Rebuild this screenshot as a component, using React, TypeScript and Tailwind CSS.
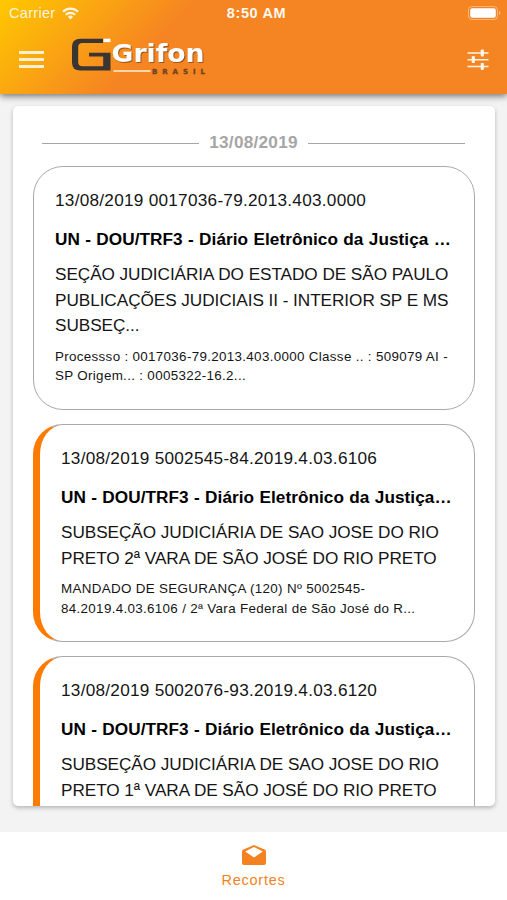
import clsx from 'clsx'

type Recorte = {
  id: string
  heading: string
  title: string
  summary: string[]
  details: string[]
  unread: boolean
}

const RECORTES: Recorte[] = [
  {
    id: '0017036',
    heading: '13/08/2019 0017036-79.2013.403.0000',
    title: 'UN - DOU/TRF3 - Diário Eletrônico da Justiça …',
    summary: ['SEÇÃO JUDICIÁRIA DO ESTADO DE SÃO PAULO', 'PUBLICAÇÕES JUDICIAIS II - INTERIOR SP E MS', 'SUBSEÇ...'],
    details: ['Processso : 0017036-79.2013.403.0000 Classe .. : 509079 AI -', 'SP Origem... : 0005322-16.2...'],
    unread: false,
  },
  {
    id: '5002545',
    heading: '13/08/2019 5002545-84.2019.4.03.6106',
    title: 'UN - DOU/TRF3 - Diário Eletrônico da Justiça…',
    summary: ['SUBSEÇÃO JUDICIÁRIA DE SAO JOSE DO RIO', 'PRETO 2ª VARA DE SÃO JOSÉ DO RIO PRETO'],
    details: ['MANDADO DE SEGURANÇA (120) Nº 5002545-', '84.2019.4.03.6106 / 2ª Vara Federal de São José do R...'],
    unread: true,
  },
  {
    id: '5002076',
    heading: '13/08/2019 5002076-93.2019.4.03.6120',
    title: 'UN - DOU/TRF3 - Diário Eletrônico da Justiça…',
    summary: ['SUBSEÇÃO JUDICIÁRIA DE SAO JOSE DO RIO', 'PRETO 1ª VARA DE SÃO JOSÉ DO RIO PRETO'],
    details: [],
    unread: true,
  },
]

function WifiIcon() {
  return (
    <svg width="17" height="13" viewBox="0 0 17 13" fill="none" stroke="#fff3dc" strokeWidth="2.3">
      <path d="M1 4.8a10.6 10.6 0 0 1 15 0" />
      <path d="M3.8 7.8a6.6 6.6 0 0 1 9.4 0" />
      <path d="M8.5 12.4 5.9 9.8a3.7 3.7 0 0 1 5.2 0z" fill="#fff3dc" stroke="none" />
    </svg>
  )
}

function BatteryIcon() {
  return (
    <svg width="33" height="14" viewBox="0 0 33 14">
      <rect x="0.5" y="0.5" width="29" height="13" rx="3.5" fill="none" stroke="#fff" strokeOpacity="0.4" />
      <rect x="2.2" y="2.2" width="25.6" height="9.6" rx="2" fill="#fff" />
      <path d="M31 5v4a2.2 2.2 0 0 0 0-4z" fill="#fff" fillOpacity="0.5" />
    </svg>
  )
}

function TuneIcon() {
  return (
    <svg width="22" height="22" viewBox="0 0 22 22" fill="#fff4e6">
      <path d="M.5 3.2h21v1.5H.5zM.5 9.9h21v1.5H.5zM.5 16.7h21v1.5H.5z" />
      <rect x="13.7" y="0.5" width="3.2" height="7" rx="0.8" />
      <rect x="4.7" y="7.1" width="3.2" height="7" rx="0.8" />
      <rect x="13.7" y="13.9" width="3.2" height="7" rx="0.8" />
    </svg>
  )
}

function Logo() {
  return (
    <svg width="140" height="40" viewBox="0 0 140 40">
      <path d="M35 1.7H12.5Q4 1.7 4 9.5v16q0 8 8.5 8h30V15.7H21v3.7h14.2v9.9H14.5q-4.3 0-4.3-4V9.9q0-4 4.3-4H35z" fill="#3a3533" />
      <path d="M35.5 1.7h7v3.4h-7z" fill="#fff" />
      <text
        x="43.6"
        y="25.4"
        fontFamily="DejaVu Sans"
        fontWeight="700"
        fontSize="25"
        textLength="93"
        lengthAdjust="spacingAndGlyphs"
        fill="#fff"
        className="drop-shadow-[1px_1px_0.5px_rgba(90,55,30,0.6)]"
      >
        Grifon
      </text>
      <path d="M45.5 33.2h37v1.5h-37z" fill="#fff0dc" />
      <text
        x="84"
        y="37"
        fontFamily="DejaVu Sans"
        fontWeight="700"
        fontSize="7"
        textLength="53"
        fill="#6a4220"
        stroke="#6a4220"
        strokeWidth="0.3"
      >
        BRASIL
      </text>
    </svg>
  )
}

function MailOpenIcon() {
  return (
    <svg width="24" height="20" viewBox="0 0 24 20">
      <path d="M12 0 22.6 4.4Q24 5 24 6.6V18q0 2-2 2H2q-2 0-2-2V6.6Q0 5 1.4 4.4z" fill="#f58220" />
      <path d="M12 2.1 20.8 6.6 12 12.6 3.2 6.6z" fill="#fff" />
    </svg>
  )
}

function RecorteCard({ item }: { item: Recorte }) {
  return (
    <article
      className={clsx(
        'shrink-0 whitespace-nowrap rounded-[30px] border border-[#a9a9a9] pt-[23px] pb-[23px] pl-[21px] text-[#151515]',
        item.unread && 'border-l-[7px] border-l-[#ff7a00]',
      )}
    >
      <p className="text-[17.2px] leading-5 tracking-[0.26px]">{item.heading}</p>
      <h2 className="mt-[19px] text-[17.2px] font-bold leading-5 tracking-[0.05px] text-black [word-spacing:0.5px]">{item.title}</h2>
      <div className="mt-[13px] text-[17.2px] leading-[25.6px] tracking-[-0.06px]">
        {item.summary.map((line) => (
          <p key={line}>{line}</p>
        ))}
      </div>
      <div className="mt-2 min-h-[39px] text-[13.4px] leading-[19.6px] tracking-[0.32px]">
        {item.details.map((line) => (
          <p key={line}>{line}</p>
        ))}
      </div>
    </article>
  )
}

export default function App() {
  return (
    <div className="flex h-[900px] w-[507px] flex-col overflow-hidden bg-[#f3f3f3] font-['Liberation_Sans',Arial,sans-serif]">
      <header className="relative h-[94px] shrink-0 bg-[linear-gradient(135deg,#ffc800_0px,#f58422_142px)] shadow-[0_2px_7px_rgba(0,0,0,0.55)]">
        <div className="grid h-[27px] grid-cols-3 items-center pl-[9px] pr-[6px] text-[14.5px] text-[#fff3dc]">
          <div className="flex items-center gap-[7px] tracking-[0.3px]">
            Carrier <WifiIcon />
          </div>
          <div className="pl-[3px] text-center font-bold tracking-[0.65px] text-[#fff8ee]">8:50 AM</div>
          <div className="flex justify-end pb-[2px]">
            <BatteryIcon />
          </div>
        </div>
        <div className="flex h-[65px] items-center pl-[19px] pr-[18px]">
          <div className="flex w-[25px] flex-col gap-[4px]">
            <span className="h-[3px] bg-[#fff0cf]" />
            <span className="h-[3px] bg-[#fff0cf]" />
            <span className="h-[3px] bg-[#fff0cf]" />
          </div>
          <div className="-mt-[6px] ml-[24px]">
            <Logo />
          </div>
          <div className="ml-auto">
            <TuneIcon />
          </div>
        </div>
      </header>

      <main className="mt-3 mr-3 ml-[13px] flex h-[700px] shrink-0 flex-col overflow-hidden rounded-[5px] bg-white px-5 shadow-[0_2px_4px_rgba(0,0,0,0.25)]">
        <div className="mt-[26px] mr-[10px] ml-[9px] flex h-[22px] shrink-0 items-center gap-[10px] text-[17.2px] font-bold tracking-[0.25px] text-[#a6a6a6]">
          <span className="h-px flex-1 bg-[#a6a6a6]" />
          13/08/2019
          <span className="h-px flex-1 bg-[#a6a6a6]" />
        </div>
        <div className="mt-3 flex flex-col gap-[14px]">
          {RECORTES.map((item) => (
            <RecorteCard key={item.id} item={item} />
          ))}
        </div>
      </main>

      <nav className="mt-auto flex h-[68px] shrink-0 flex-col items-center bg-white pt-[13px] text-[#f58220]">
        <MailOpenIcon />
        <span className="mt-[5px] text-[14.5px] leading-5 tracking-[0.75px]">Recortes</span>
      </nav>
    </div>
  )
}
